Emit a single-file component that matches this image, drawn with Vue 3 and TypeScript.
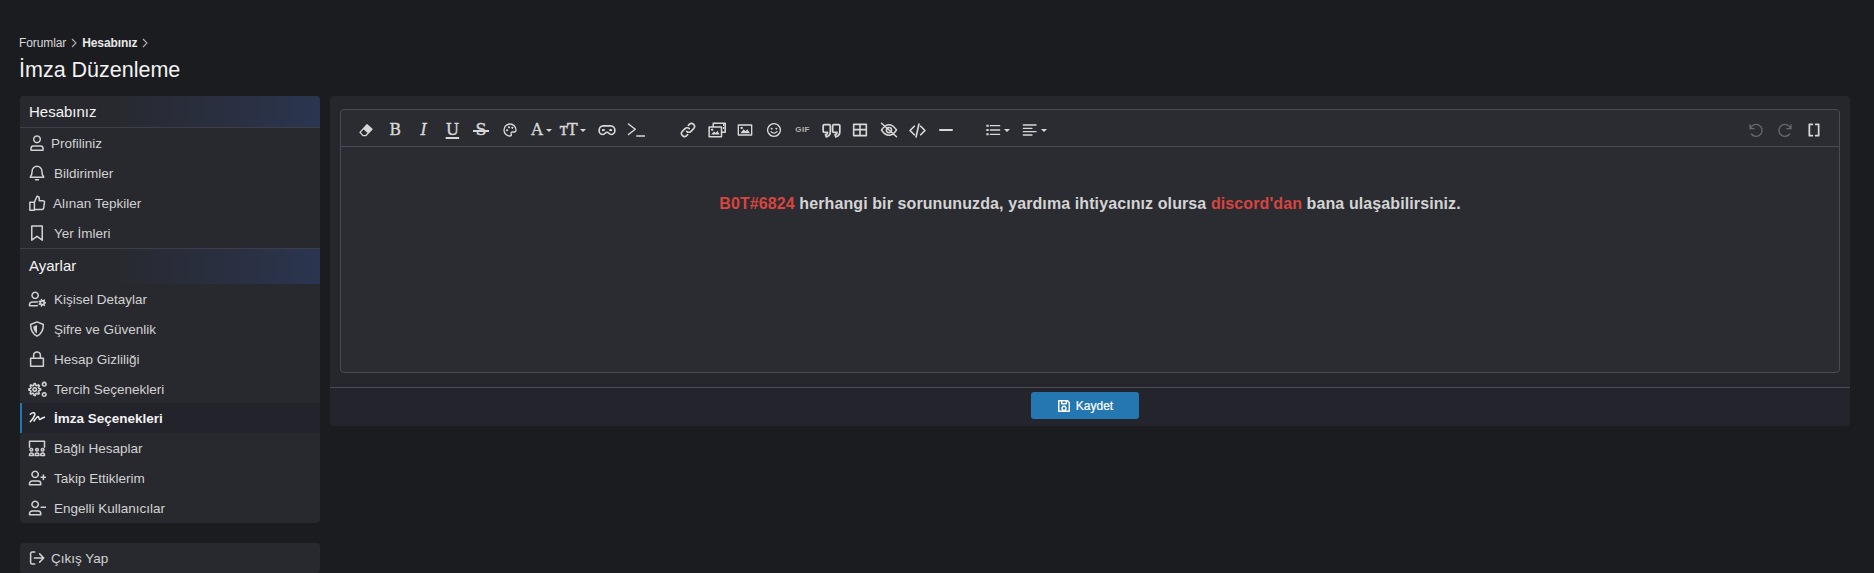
<template>
  <div class="page">
    <div class="breadcrumb">
      <span>Forumlar</span>
      <svg class="crumb-sep" viewBox="0 0 8 10"><path d="M2 1l4 4-4 4" /></svg>
      <b>Hesabınız</b>
      <svg class="crumb-sep" viewBox="0 0 8 10"><path d="M2 1l4 4-4 4" /></svg>
    </div>
    <h1 class="title">İmza Düzenleme</h1>

    <div class="columns">
      <aside class="side">
        <nav class="side-block">
          <template v-for="row in menu" :key="row.label">
            <div v-if="row.head" class="side-head">{{ row.label }}</div>
            <a v-else class="side-item" :class="{ active: row.active }">
              <span class="side-icon" :style="{ width: (row.slot || 26) + 'px' }">
                <svg :width="row.size || 18" :height="row.size || 18" viewBox="0 0 24 24" class="ico">
                  <path :d="row.d" />
                  <path v-if="row.fill" :d="row.fill" class="solid" />
                </svg>
              </span>
              {{ row.label }}
            </a>
          </template>
        </nav>
        <nav class="side-block logout">
          <a class="side-item">
            <span class="side-icon" :style="{ width: '23px' }">
              <svg width="18" height="18" viewBox="0 0 24 24" class="ico">
                <path d="M9 4H5.500A2 2 0 0 0 3.500 6v12a2 2 0 0 0 2 2H9M8.500 12H21M15.500 6.500L21 12l-5.500 5.500" />
              </svg>
            </span>
            Çıkış Yap
          </a>
        </nav>
      </aside>

      <main class="panel">
        <div class="editor">
          <div class="toolbar">
            <div v-for="(group, gi) in toolGroups" :key="gi" class="tool-group" :class="{ push: gi === toolGroups.length - 1 }">
              <span
                v-for="tool in group"
                :key="tool.name"
                class="tool"
                :class="[tool.name, { muted: tool.muted, caret: tool.caret }]"
                :title="tool.name"
              >
                <span v-if="tool.text" class="glyph" :class="tool.cls">{{ tool.text }}</span>
                <svg v-else :width="tool.size || 16" :height="tool.size || 16" viewBox="0 0 24 24" class="ico">
                  <path :d="tool.d" :style="{ strokeWidth: tool.sw || 2 }" />
                  <path v-if="tool.fill" :d="tool.fill" class="solid" />
                </svg>
                <i v-if="tool.caret" class="caret-mark"></i>
              </span>
            </div>
          </div>
          <div class="content">
            <p>
              <span class="red">B0T#6824</span> herhangi bir sorununuzda, yardıma ihtiyacınız olursa
              <span class="red">discord'dan</span> bana ulaşabilirsiniz.
            </p>
          </div>
        </div>
        <div class="footer">
          <button class="save" type="button">
            <svg width="14" height="14" viewBox="0 0 24 24" class="ico">
              <path d="M3 3h15l3 3v15H3zM8 3v5h8V3M12 12.500a3.500 3.500 0 1 0 .01 0z" style="stroke-width: 2.500" />
            </svg>
            Kaydet
          </button>
        </div>
      </main>
    </div>
  </div>
</template>

<script setup lang="ts">
interface MenuRow {
  label: string
  head?: boolean
  active?: boolean
  d?: string
  fill?: string
  slot?: number
  size?: number
}

interface Tool {
  name: string
  d?: string
  fill?: string
  text?: string
  cls?: string
  size?: number
  sw?: number
  caret?: boolean
  muted?: boolean
}

// toothed outline for the cog icons
function gear(cx: number, cy: number, outer: number, inner: number, teeth: number, hole: number) {
  const pts: string[] = []
  const step = (Math.PI * 2) / (teeth * 4)
  for (let i = 0; i < teeth * 4; i++) {
    const r = i % 4 < 2 ? outer : inner
    const a = i * step - step / 2
    pts.push(`${(cx + r * Math.cos(a)).toFixed(2)} ${(cy + r * Math.sin(a)).toFixed(2)}`)
  }
  return `M${pts.join('L')}zM${cx} ${cy - hole}a${hole} ${hole} 0 1 0 .01 0z`
}

const person = 'M9.500 3a4.200 4.200 0 1 0 .01 0zM2 21v-1.500a3.500 3.500 0 0 1 3.500-3.500h8a3.500 3.500 0 0 1 3.500 3.500V21z'

const menu: MenuRow[] = [
  { label: 'Hesabınız', head: true },
  { label: 'Profiliniz', slot: 23, d: 'M12 2.500a4.500 4.500 0 1 0 .01 0zM4 21.500V19a3 3 0 0 1 3-3h10a3 3 0 0 1 3 3v2.500z' },
  { label: 'Bildirimler', d: 'M12 3a6.500 6.500 0 0 0-6.500 6.500c0 4-1 6-2.500 8h18c-1.500-2-2.500-4-2.500-8A6.500 6.500 0 0 0 12 3zM10 21h4' },
  { label: 'Alınan Tepkiler', slot: 25, d: 'M8.500 11l3.500-8c1.800 0 3 1.200 3 3v3h5a2 2 0 0 1 2 2.300l-1.200 7.700a2 2 0 0 1-2 1.500H8.500zM2.500 11h6v10.500h-6z' },
  { label: 'Yer İmleri', d: 'M5 2.500h14v19l-7-5-7 5z' },
  { label: 'Ayarlar', head: true },
  { label: 'Kişisel Detaylar', d: 'M9.500 3a4.200 4.200 0 1 0 .01 0zM12.500 21H2v-1.500A3.500 3.500 0 0 1 5.500 16h7', fill: gear(19, 17, 5.500, 3.800, 7, 1.500) },
  { label: 'Şifre ve Güvenlik', d: 'M12 2.500l8.500 3.500c0 7-2.500 12.500-8.500 15.500C6 18.500 3.500 13 3.500 6z', fill: 'M12 6.500v11.500C9 16 7 13 7 8.500z' },
  { label: 'Hesap Gizliliği', d: 'M3.500 11h17v10.500h-17zM7.500 11V7a4.500 4.500 0 0 1 9 0v4' },
  { label: 'Tercih Seçenekleri', size: 19, d: gear(8.500, 12, 7.500, 5.300, 8, 2.200) + 'M20.500 3a2.300 2.300 0 1 0 .01 0zM20.500 16a2.300 2.300 0 1 0 .01 0z' },
  { label: 'İmza Seçenekleri', active: true, d: 'M3 7c3-3 7-3 6 1-1 3-4 7-6 9M8 16c2-3 4-6 5.500-6 1.500 0 .5 4 2 4s3-2 6.500-3' },
  { label: 'Bağlı Hesaplar', d: 'M2 11V3h20v8M4.500 12.500a1.800 1.800 0 1 0 .01 0zM12 12.500a1.800 1.800 0 1 0 .01 0zM19.500 12.500a1.800 1.800 0 1 0 .01 0zM2 22v-1a2.500 2.500 0 0 1 5 0v1zM9.500 22v-1a2.500 2.500 0 0 1 5 0v1zM17 22v-1a2.500 2.500 0 0 1 5 0v1z' },
  { label: 'Takip Ettiklerim', d: person + 'M20.500 8v6M17.500 11h6' },
  { label: 'Engelli Kullanıcılar', d: person + 'M17.500 11h6' },
]

const toolGroups: Tool[][] = [
  [
    { name: 'eraser', d: 'M13.500 4l7.500 7-9.500 9.500H7.500L3 15.500z', fill: 'M13.500 4l7.500 7-6 6-7.500-6.500z' },
    { name: 'bold', text: 'B', cls: 'slab' },
    { name: 'italic', text: 'I', cls: 'slab italic' },
    { name: 'underline', text: 'U', cls: 'slab under' },
    { name: 'strike', text: 'S', cls: 'slab strike' },
    { name: 'color', d: 'M12 3a9 9 0 0 0 0 18c2 0 2.500-1.500 1.800-3-.6-1.500.2-3 2-3h3c1.500 0 2.200-1 2.200-3 0-5-4-9-9-9z', fill: 'M7.500 11a1.500 1.500 0 1 0 .01 0zM10.500 6.500a1.500 1.500 0 1 0 .01 0zM15.500 7a1.500 1.500 0 1 0 .01 0z' },
    { name: 'font', text: 'A', cls: 'slab', caret: true },
    { name: 'size', text: 'тT', cls: 'slab tall', caret: true },
    { name: 'mask', size: 18, sw: 2.200, d: 'M7 6.500h10c3 0 5.500 2.500 5.500 6 0 3-2 5.500-5 5.500-3 0-3-3-5.500-3s-2.500 3-5.500 3-5-2.500-5-5.500c0-3.500 2.500-6 5.500-6z', fill: 'M6 10.500c2 0 3.500.8 3.500 1.500S8 13.500 6.500 13.500 4.500 12.500 6 10.500zM18 10.500c-2 0-3.500.8-3.500 1.500s1.500 1.500 3 1.500 2-1 .5-3z' },
    { name: 'tty', size: 18, d: 'M2 4l9 7-9 7M13 20h11' },
  ],
  [
    { name: 'link', d: 'M10 14a4.500 4.500 0 0 0 6.500 0l4-4a4.600 4.600 0 0 0-6.500-6.500l-1.500 1.500M14 10a4.500 4.500 0 0 0-6.500 0l-4 4a4.600 4.600 0 0 0 6.500 6.500l1.500-1.500', sw: 2.400 },
    { name: 'gallery', size: 18, d: 'M7 7V3h16v12h-4M1.500 8h16.500v13H1.500z', fill: 'M4 18l4-4 2.500 2 2-3 3 5zM5.500 10a1.500 1.500 0 1 0 .01 0zM20 4h2v2.500h-2zM20 8h2v2.500h-2z' },
    { name: 'image', d: 'M2 4.500h20v15H2z', fill: 'M5 17l5-6 3 3 2.500-3 4 6zM7 7a1.800 1.800 0 1 0 .01 0z' },
    { name: 'smile', d: 'M12 2.500a9.500 9.500 0 1 0 .01 0zM7.500 14.500c2.500 3 6.500 3 9 0', fill: 'M8.500 8.500a1.400 1.400 0 1 0 .01 0zM15.500 8.500a1.400 1.400 0 1 0 .01 0z' },
    { name: 'gif', text: 'GIF', cls: 'gif' },
    { name: 'quote', size: 19, sw: 2.200, d: 'M3 4.500h6A1.500 1.500 0 0 1 10.500 6v7.500c0 3.500-2 5.500-5 6.500l-1-2.500c1.500-.5 2.500-1.500 2.500-3H3a1.500 1.500 0 0 1-1.500-1.500V6A1.500 1.500 0 0 1 3 4.500zM15 4.500h6A1.500 1.500 0 0 1 22.500 6v7.500c0 3.500-2 5.500-5 6.500l-1-2.500c1.500-.5 2.500-1.500 2.500-3H15a1.500 1.500 0 0 1-1.500-1.500V6A1.500 1.500 0 0 1 15 4.500z' },
    { name: 'table', d: 'M2.500 3.500h19v17h-19zM2.500 11.500h19M12 5v15', sw: 2.400 },
    { name: 'hide', size: 18, d: 'M2 12c3-4.500 6-7 10-7s7 2.500 10 7c-3 4.500-6 7-10 7s-7-2.500-10-7zM8.500 12a3.500 3.500 0 0 0 7 0 3.500 3.500 0 0 0-7 0zM2 3l20 18' },
    { name: 'code', size: 17, d: 'M7.500 6l-6 6 6 6M16.500 6l6 6-6 6M14 3l-4 18', sw: 2.400 },
    { name: 'hr', d: 'M3 12h18', sw: 3 },
  ],
  [
    { name: 'list', d: 'M8 5.500h14M8 12h14M8 18.500h14', fill: 'M2 4h3.500v3H2zM2 10.500h3.500v3H2zM2 17h3.500v3H2z', caret: true },
    { name: 'align', d: 'M2 4.500h19M2 9.500h13M2 14.500h19M2 19.500h13', caret: true },
  ],
  [
    { name: 'undo', muted: true, d: 'M3 4v6h6M3.500 10a9 9 0 1 1 1.500 8' },
    { name: 'redo', muted: true, d: 'M21 4v6h-6M20.500 10a9 9 0 1 0-1.500 8' },
    { name: 'fullscreen', d: 'M9.500 3.500H5v17h4.500M14.500 3.500H19v17h-4.500', sw: 2.600 },
  ],
]
</script>

<style scoped>
.page {
  height: 573px;
  padding: 36px 24px 0 20px;
  box-sizing: border-box;
  overflow: hidden;
  font-family: "Liberation Sans", Arial, sans-serif;
  color: #d4d4d4;
}
.breadcrumb { display: flex; align-items: center; height: 14px; margin-left: -1px; font-size: 12px; letter-spacing: -.1px; color: #d8d8d8; }
.breadcrumb b { color: #e8e8e8; }
.crumb-sep { width: 8px; height: 10px; margin: 0 4px 0 4px; fill: none; stroke: #b0b0b0; stroke-width: 1.100; }
.title { margin: 7px 0 0 -1px; height: 39px; font-size: 21.500px; line-height: 27px; font-weight: 400; color: #f2f2f2; }

.columns { display: grid; grid-template-columns: 300px 1fr; gap: 10px; align-items: start; }
.side { display: flex; flex-direction: column; gap: 20px; }
.side-block { background: #28292e; border-radius: 4px; overflow: hidden; }
.side-head {
  height: 32px;
  line-height: 31px;
  padding: 0 9px;
  box-sizing: border-box;
  font-size: 15px;
  color: #f4f4f4;
  background: linear-gradient(90deg, #28292e 30%, #2b3550 100%);
  border-bottom: 1px solid #3d3e4a;
}
.side-head:not(:first-child) { height: 36px; line-height: 34px; border-bottom: 0; border-top: 1px solid #3d3e4a; }
.side-item {
  display: flex;
  align-items: center;
  height: 30px;
  padding-left: 8px;
  font-size: 13.500px;
  color: #d2d2d2;
  box-sizing: border-box;
}
.side-item.active { margin-top: -1px; background: #22232b; color: #f2f2f2; font-weight: 700; box-shadow: inset 2px 0 0 #2577b1; }
.side-icon { display: inline-flex; flex: none; }
.ico { display: block; fill: none; stroke: currentColor; stroke-width: 2; stroke-linejoin: round; stroke-linecap: round; }
.ico .solid { fill: currentColor; fill-rule: evenodd; stroke: none; }

.panel { background: #26272c; border-radius: 4px; padding-top: 13px; overflow: hidden; }
.editor { margin: 0 10px 14px; border: 1px solid #494a58; border-radius: 4px; background: #2a2c31; }
.toolbar { display: flex; align-items: center; height: 32px; padding: 4px 11px 0 11px; border-bottom: 1px solid #494a58; color: #d8d8d8; }
.tool-group { display: flex; margin-right: 23px; }
.tool-group:nth-child(2) { margin-right: 22px; }
.tool-group.push { margin: 0 0 0 auto; }
.tool { display: flex; align-items: center; justify-content: center; width: 28.700px; height: 32px; position: relative; }
.tool.caret { width: 37px; justify-content: flex-start; padding-left: 3px; box-sizing: border-box; }
.tool.font { width: 30px; padding-left: 7px; }
.tool.size { width: 39px; padding-left: 5px; }
.tool.muted { color: #666870; }
.tool.gif { color: #b4b4b4; }
.caret-mark { margin-left: 3px; border: 3px solid transparent; border-top: 3px solid currentColor; border-bottom: 0; }
.glyph { font-family: "DejaVu Serif", serif; font-size: 16px; line-height: 1; position: relative; }
.glyph.slab { -webkit-text-stroke: .35px currentColor; }
.glyph.italic { font-style: italic; }
.glyph.under { text-decoration: underline; text-decoration-thickness: 1.500px; text-underline-offset: 2px; }
.glyph.strike::after { content: ""; position: absolute; left: -2.500px; right: -2.500px; top: 8px; height: 1.500px; background: currentColor; }
.glyph.tall { letter-spacing: -1px; }
.glyph.gif { font-family: "Liberation Sans", sans-serif; font-size: 8px; font-weight: 700; letter-spacing: .5px; }

.content { height: 225px; padding-top: 45px; box-sizing: border-box; }
.content p { margin: 0; text-align: center; font-size: 16px; line-height: 24px; font-weight: 700; letter-spacing: .1px; color: #d4d4d4; }
.red { color: #d8443f; }
.footer { height: 39px; border-top: 1px solid #4a4b57; background: #24252c; display: flex; justify-content: center; padding: 4px 10px 0 0; box-sizing: border-box; }
.save {
  display: flex;
  align-items: center;
  justify-content: center;
  gap: 5px;
  width: 108px;
  height: 27px;
  border: 0;
  border-radius: 3px;
  background: #2577b1;
  color: #fff;
  font-family: inherit;
  font-size: 12px;
  -webkit-text-stroke: .2px currentColor;
}
</style>

<style>
html, body { background: #1b1c20; overflow: hidden; }
</style>
